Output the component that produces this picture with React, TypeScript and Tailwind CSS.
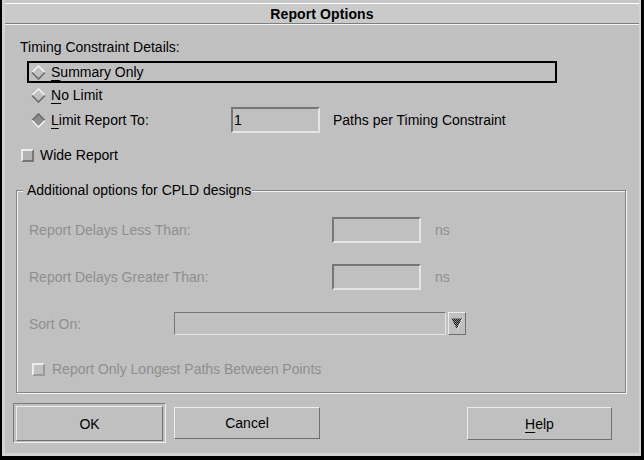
import React from 'react';

const sunken2 =
  'border-2 border-t-[#777777] border-l-[#777777] border-b-[#e4e4e4] border-r-[#e4e4e4]';
const raised1 =
  'border border-t-[#ededed] border-l-[#ededed] border-b-[#6f6f6f] border-r-[#6f6f6f]';

function Diamond({ on = false }: { on?: boolean }) {
  return (
    <svg width="15" height="15" viewBox="0 0 15 15" className="shrink-0">
      <polygon points="7.5,1 14,7.5 7.5,14 1,7.5" fill={on ? '#8e8e8e' : '#c0c0c0'} />
      <polyline
        points="1,7.5 7.5,1 14,7.5"
        fill="none"
        stroke={on ? '#6a6a6a' : '#f2f2f2'}
        strokeWidth="1.6"
      />
      <polyline
        points="1,7.5 7.5,14 14,7.5"
        fill="none"
        stroke={on ? '#f2f2f2' : '#6a6a6a'}
        strokeWidth="1.6"
      />
    </svg>
  );
}

function Toggle({ disabled = false }: { disabled?: boolean }) {
  return (
    <span
      className={`block w-[13px] h-[13px] shrink-0 border-2 border-t-[#ececec] border-l-[#ececec] ${
        disabled ? 'border-b-[#9a9a9a] border-r-[#9a9a9a] bg-[#c0c0c0]' : 'border-b-[#777777] border-r-[#777777] bg-[#b2b2b2]'
      }`}
    />
  );
}

function U({ children }: { children: React.ReactNode }) {
  return <span className="underline decoration-1 underline-offset-[3px]">{children}</span>;
}

function DropArrow() {
  return (
    <svg width="12" height="12" viewBox="0 0 12 12">
      <defs>
        <pattern id="stip" width="2" height="2" patternUnits="userSpaceOnUse">
          <rect width="2" height="2" fill="#8a8a8a" />
          <rect width="1" height="1" fill="#1a1a1a" />
          <rect x="1" y="1" width="1" height="1" fill="#1a1a1a" />
        </pattern>
      </defs>
      <polygon points="0.5,0.5 11.5,0.5 6,11.5" fill="url(#stip)" />
      <polyline points="11.5,0.5 6,11.5" fill="none" stroke="#f0f0f0" strokeWidth="1" />
    </svg>
  );
}

export default function App() {
  return (
    <div className="w-[644px] h-[460px] bg-black overflow-hidden font-[family-name:Liberation_Sans,Arial,sans-serif] text-[14px] leading-[16px] text-black">
      <div className="ml-[2px] w-[639px] h-[456px] flex flex-col bg-[#c0c0c0] border-l-[3px] border-r-[2px] border-b-[3px] border-[#d2d2d2]">
        {/* title bar */}
        <div className="border-t-[3px] border-[#c6c6c6]">
          <div className="h-[20px] bg-[#cacaca] border-t border-t-white flex items-center justify-center">
            <span className="font-bold text-[14px] tracking-[0.1px]">Report Options</span>
          </div>
          <div className="h-px bg-[#7e7e7e]" />
          <div className="h-px bg-[#f4f4f4]" />
        </div>

        <div className="flex flex-col">
          <div className="mt-[14px] ml-[15px] h-[16px]">Timing Constraint Details:</div>

          <div className="mt-[6px] ml-[22px] w-[530px] h-[22px] border-2 border-black flex items-center pl-[2px] gap-[5px]">
            <Diamond />
            <span>
              <U>S</U>ummary Only
            </span>
          </div>

          <div className="ml-[22px] h-[24px] border-2 border-transparent flex items-center pl-[2px] gap-[5px]">
            <Diamond />
            <span>
              <U>N</U>o Limit
            </span>
          </div>

          <div className="ml-[26px] h-[26px] flex items-center">
            <div className="w-[200px] flex items-center gap-[5px]">
              <Diamond on />
              <span>
                <U>L</U>imit Report To:
              </span>
            </div>
            <div className={`w-[89px] h-[26px] ${sunken2} flex items-center pl-[1px]`}>1</div>
            <span className="ml-[13px]">Paths per Timing Constraint</span>
          </div>

          <div className="mt-[15px] ml-[16px] h-[14px] flex items-center gap-[6px]">
            <Toggle />
            <span>Wide Report</span>
          </div>

          {/* CPLD group */}
          <div className="mt-[28px] ml-[11px] w-[610px] h-[203px] border border-[#838383] shadow-[inset_1px_1px_0_#f4f4f4,1px_1px_0_#f4f4f4] flex flex-col">
            <span className="-mt-[9px] ml-[6px] pl-[4px] pr-[1px] self-start h-[16px] bg-[#c0c0c0]">
              Additional options for CPLD designs
            </span>

            <div className="mt-[19px] ml-[12px] h-[26px] flex items-center text-[#8f8f8f]">
              <span className="w-[303px]">Report Delays Less Than:</span>
              <div className={`w-[89px] h-[26px] ${sunken2}`} />
              <span className="ml-[14px]">ns</span>
            </div>

            <div className="mt-[21px] ml-[12px] h-[26px] flex items-center text-[#8f8f8f]">
              <span className="w-[303px]">Report Delays Greater Than:</span>
              <div className={`w-[89px] h-[26px] ${sunken2}`} />
              <span className="ml-[14px]">ns</span>
            </div>

            <div className="mt-[22px] ml-[12px] h-[23px] flex items-center text-[#8f8f8f]">
              <span className="w-[145px]">Sort On:</span>
              <div className="w-[272px] h-[23px] border border-t-[#777777] border-l-[#777777] border-b-[#e4e4e4] border-r-[#e4e4e4]" />
              <div className={`ml-[2px] w-[18px] h-[23px] ${raised1} flex items-center justify-center`}>
                <DropArrow />
              </div>
            </div>

            <div className="mt-[27px] ml-[15px] h-[14px] flex items-center gap-[7px] text-[#8f8f8f]">
              <Toggle disabled />
              <span>Report Only Longest Paths Between Points</span>
            </div>
          </div>

          {/* buttons */}
          <div className="mt-[10px] ml-[8px] flex items-start">
            <div className="w-[153px] h-[40px] border border-t-[#7a7a7a] border-l-[#7a7a7a] border-b-[#eeeeee] border-r-[#eeeeee] pt-[2px] px-[2px]">
              <button className={`w-[147px] h-[35px] ${raised1} flex items-center justify-center`}>OK</button>
            </div>
            <button className={`ml-[8px] mt-[4px] w-[146px] h-[32px] ${raised1} flex items-center justify-center`}>
              Cancel
            </button>
            <button className={`ml-[147px] mt-[4px] w-[145px] h-[33px] ${raised1} flex items-center justify-center`}>
              <span>
                <U>H</U>elp
              </span>
            </button>
          </div>
        </div>
      </div>
    </div>
  );
}
